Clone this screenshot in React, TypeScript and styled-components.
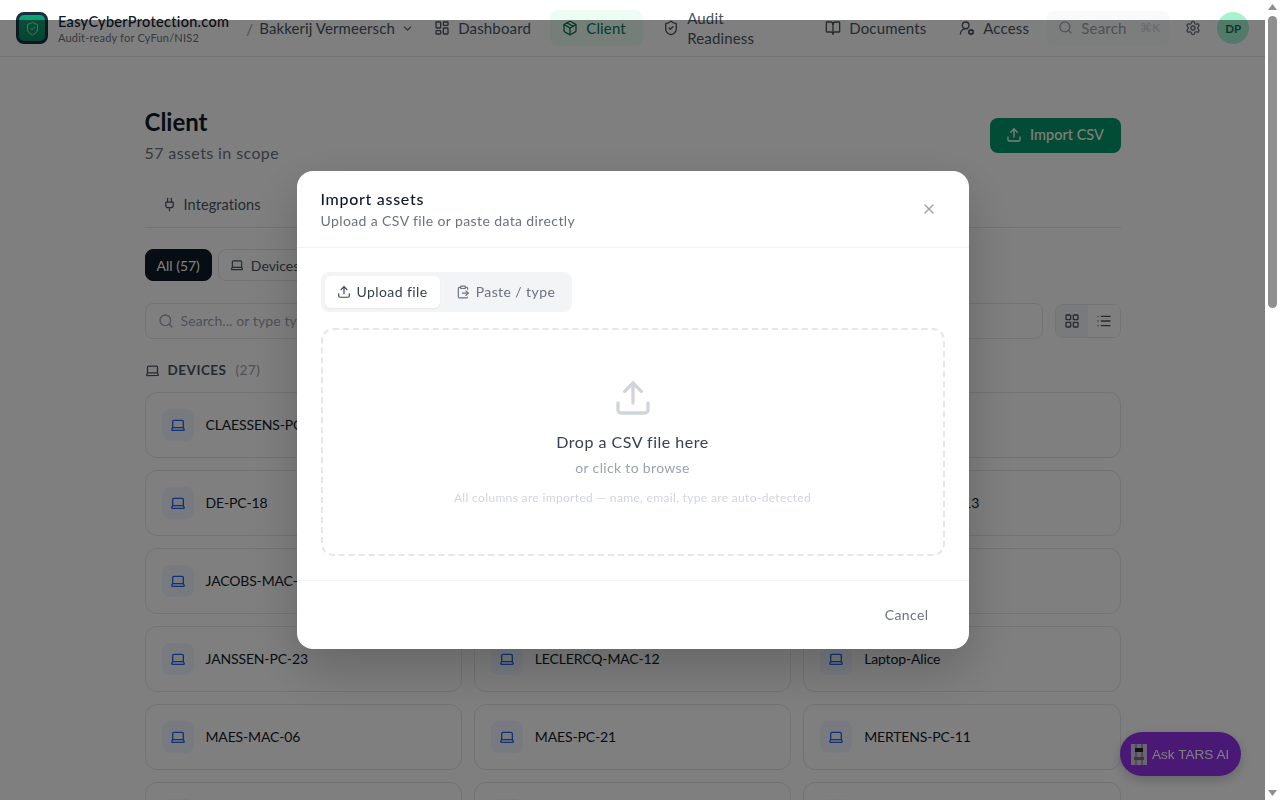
import React from "react";
import styled, { createGlobalStyle } from "styled-components";
import { Upload, ClipboardPaste, Plug, Laptop, Search, LayoutGrid, LayoutDashboard, List, X, ChevronDown, Package, ShieldCheck, BookOpen, UserRoundCog, Settings } from "lucide-react";

const Global = createGlobalStyle`
  html { overflow-x: hidden; }
  body { margin: 0; background: #fff; font-family: "Lato", "Noto Sans", sans-serif; color: #111827; }
  * { box-sizing: border-box; }
  svg { flex-shrink: 0; }
`;

const Page = styled.div`margin-right: 15px;`;
const Header = styled.header`
  height: 57px; display: flex; align-items: center; padding: 0 16px; border-bottom: 1px solid #e5e7eb; background: #fff;
`;
const Brand = styled.div`display: flex; align-items: center; gap: 10px; width: 226px; flex: none;`;
const Logo = styled.div`
  width: 32px; height: 32px; border-radius: 8px; flex: none; display: flex; align-items: center; justify-content: center;
  background: linear-gradient(180deg, #10a373, #0b8a60); border: 3px solid #173042; color: #a7e8cc;
`;
const BrandName = styled.div`font-size: 14.5px; font-weight: 500; line-height: 18px; letter-spacing: .3px; color: #111827; white-space: nowrap;`;
const BrandSub = styled.div`font-size: 11px; line-height: 13px; letter-spacing: .2px; color: #6b7280; white-space: nowrap;`;
const Slash = styled.span`color: #9ca3af; font-size: 16px; margin: 0 6px 0 4px;`;
const Org = styled.div`display: flex; align-items: center; gap: 6px; font-size: 15px; letter-spacing: .1px; color: #4b5563; width: 163px; flex: none; white-space: nowrap;`;
const Nav = styled.nav`display: flex; align-items: center; gap: 8px; flex: none;`;
const NavItem = styled.div<{ $w: number; $active?: boolean }>`
  width: ${(p) => p.$w}px; height: 36px; padding: 0 12px 1px; display: flex; align-items: center; gap: 8px; flex: none;
  font-size: 15px; letter-spacing: .15px; line-height: 20px; border-radius: 8px; color: ${(p) => (p.$active ? "#047857" : "#4b5563")};
  background: ${(p) => (p.$active ? "#ecfdf5" : "transparent")};
`;
const NavWrap = styled.span`width: 70px; flex: none;`;
const SearchPill = styled.div`
  width: 124px; height: 34px; padding: 0 10px 1px 12px; display: flex; align-items: center; gap: 8px; flex: none;
  border-radius: 8px; background: #f9fafb; color: #9ca3af; font-size: 15px; letter-spacing: .2px;
`;
const Kbd = styled.span`font-size: 12px; letter-spacing: 0; color: #d1d5db; margin-left: auto;`;
const IconSlot = styled.div`width: 32px; display: flex; justify-content: center; color: #6b7280; margin-left: 7px; flex: none;`;
const Avatar = styled.div`
  width: 32px; height: 32px; border-radius: 50%; flex: none; margin-left: 8px; background: #a7f3d0; color: #047857;
  display: flex; align-items: center; justify-content: center; font-size: 11.5px; font-weight: 700;
`;
const Main = styled.main`width: 976px; margin: 0 auto; padding-top: 47px; padding-bottom: 40px;`;
const TitleRow = styled.div`display: flex; justify-content: space-between; align-items: flex-start;`;
const H1 = styled.h1`margin: 0; font-size: 24px; line-height: 36px; font-weight: 700; color: #111827;`;
const Sub = styled.p`margin: 1px 0 0; font-size: 16px; letter-spacing: .4px; line-height: 24px; color: #6b7280;`;
const ImportBtn = styled.button`
  margin-top: 14px; width: 131px; height: 35px; padding: 0 0 2px; border: 0; border-radius: 8px; background: #059669; color: #fff;
  font: 500 14.5px "Lato", sans-serif; display: flex; align-items: center; justify-content: center; gap: 8px;
`;
const Tabs = styled.div`margin-top: 20px; height: 43px; border-bottom: 1px solid #e5e7eb; padding: 0 18px 3px 17px; display: flex; align-items: center; gap: 7px; font-size: 14.5px; letter-spacing: .1px; color: #4b5563;`;
const Pills = styled.div`margin-top: 21px; display: flex; gap: 6px;`;
const Pill = styled.div<{ $on?: boolean }>`
  height: 32px; padding: 0 11px; border-radius: 8px; display: flex; align-items: center; gap: 7px; font-size: 14px; white-space: nowrap;
  background: ${(p) => (p.$on ? "#111827" : "#fff")}; color: ${(p) => (p.$on ? "#fff" : "#4b5563")};
  border: 1px solid ${(p) => (p.$on ? "#111827" : "#e5e7eb")};
`;
const SearchRow = styled.div`margin-top: 22px; display: flex; align-items: center; gap: 12px;`;
const SearchBox = styled.div`
  flex: 1; height: 36px; border: 1px solid #e5e7eb; border-radius: 8px; padding: 0 12px 1px; display: flex; align-items: center; gap: 7px;
  color: #9ca3af; font-size: 14px; letter-spacing: .1px;
`;
const Toggle = styled.div`width: 66px; height: 34px; border: 1px solid #e5e7eb; border-radius: 8px; display: flex; overflow: hidden; flex: none;`;
const ToggleBtn = styled.div<{ $on?: boolean }>`
  flex: 1; display: flex; align-items: center; justify-content: center; color: #4b5563; background: ${(p) => (p.$on ? "#f3f4f6" : "#fff")};
`;
const Section = styled.div`margin-top: 21px; height: 20px; display: flex; align-items: center; gap: 8px; font-size: 13.5px; font-weight: 700; letter-spacing: .5px; color: #4b5563;`;
const Count = styled.span`font-weight: 400; color: #9ca3af; margin-left: 1px;`;
const Grid = styled.div`margin-top: 12px; display: grid; grid-template-columns: repeat(3, 1fr); gap: 12px;`;
const Card = styled.div`height: 66px; border: 1px solid #e5e7eb; border-radius: 12px; padding: 0 16px 1px; display: flex; align-items: center; gap: 12px; font-size: 14px; letter-spacing: -.15px; color: #111827; white-space: nowrap;`;
const CardIcon = styled.div`width: 32px; height: 32px; border-radius: 8px; background: #eff6ff; color: #2563eb; display: flex; align-items: center; justify-content: center; flex: none;`;
const Fab = styled.div`
  position: fixed; right: 39px; bottom: 24px; width: 121px; height: 44px; border-radius: 22px; background: #9333ea; color: #fff;
  display: flex; align-items: center; gap: 5px; padding-left: 11px; font: 13.6px "Liberation Sans", sans-serif; box-shadow: 0 4px 12px rgba(0,0,0,.2);
`;
const Overlay = styled.div`
  position: fixed; top: 20px; left: 0; right: 15px; bottom: 0; background: rgba(0,0,0,.5);
  display: flex; align-items: center; justify-content: center; z-index: 10;
`;
const Modal = styled.div`width: 672px; height: 478px; background: #fff; border-radius: 16px; display: flex; flex-direction: column; box-shadow: 0 20px 50px rgba(0,0,0,.2);`;
const ModalHead = styled.div`height: 77px; padding: 16px 24px 0; border-bottom: 1px solid #f3f4f6; display: flex; justify-content: space-between;`;
const ModalTitle = styled.div`font-size: 16px; font-weight: 500; letter-spacing: .7px; line-height: 24px; color: #111827;`;
const ModalSub = styled.div`font-size: 14px; letter-spacing: .39px; line-height: 20px; color: #6b7280;`;
const Close = styled.div`color: #9ca3af; margin: 14px 8px 0 0; width: 16px; height: 16px;`;
const ModalBody = styled.div`flex: 1; padding: 24px;`;
const Segment = styled.div`width: 251px; height: 40px; padding: 4px; background: #f3f4f6; border-radius: 8px; display: flex; gap: 4px;`;
const Seg = styled.div<{ $on?: boolean }>`
  height: 32px; padding: 0 12px 1px; display: flex; align-items: center; gap: 6px; font-size: 14px; letter-spacing: .42px; border-radius: 6px;
  background: ${(p) => (p.$on ? "#fff" : "transparent")}; color: ${(p) => (p.$on ? "#374151" : "#6b7280")};
  box-shadow: ${(p) => (p.$on ? "0 1px 2px rgba(0,0,0,.05)" : "none")};
`;
const Drop = styled.div`
  margin-top: 16px; height: 228px; border: 2px dashed #e5e7eb; border-radius: 12px; display: flex; flex-direction: column; align-items: center; padding-top: 48px;
`;
const DropIcon = styled.div`color: #d1d5db; height: 40px;`;
const DropTitle = styled.div`margin-top: 13px; font-size: 16px; letter-spacing: .5px; line-height: 22px; color: #374151;`;
const DropSub = styled.div`margin-top: 5px; font-size: 14px; letter-spacing: .33px; line-height: 20px; color: #9ca3af;`;
const DropHint = styled.div`margin-top: 11px; font-size: 12px; letter-spacing: .34px; line-height: 18px; color: #d1d5db;`;
const ModalFoot = styled.div`height: 69px; border-top: 1px solid #f3f4f6; padding: 0 40px 2px; display: flex; align-items: center; justify-content: flex-end; font-size: 14px; letter-spacing: .4px; color: #6b7280;`;
const Scrollbar = styled.div`
  position: fixed; top: 0; right: 0; bottom: 0; width: 15px; background: #fff; z-index: 20;
  display: flex; flex-direction: column; align-items: center; justify-content: space-between; padding: 4px 0;
`;
const Thumb = styled.div`position: absolute; top: 16px; left: 3px; width: 9px; height: 292px; border-radius: 5px; background: #8f8f8f;`;

const rows = [
  ["CLAESSENS-PC-01", "", ""],
  ["DE-PC-18", "", "VERHAEGE-PC-13"],
  ["JACOBS-MAC-04", "", ""],
  ["JANSSEN-PC-23", "LECLERCQ-MAC-12", "Laptop-Alice"],
  ["MAES-MAC-06", "MAES-PC-21", "MERTENS-PC-11"],
  ["", "", ""],
  ["", "", ""],
  ["", "", ""],
].flat();

export default function App() {
  return (
    <>
      <Global />
      <Page>
        <Header>
          <Brand>
            <Logo><ShieldCheck size={15} strokeWidth={1.6} /></Logo>
            <div>
              <BrandName>EasyCyberProtection.com</BrandName>
              <BrandSub>Audit-ready for CyFun/NIS2</BrandSub>
            </div>
          </Brand>
          <Slash>/</Slash>
          <Org>Bakkerij Vermeersch <ChevronDown size={13} /></Org>
          <Nav>
            <NavItem $w={120}><LayoutDashboard size={16} />Dashboard</NavItem>
            <NavItem $w={93} $active><Package size={16} />Client</NavItem>
            <NavItem $w={154}><ShieldCheck size={16} /><NavWrap>Audit Readiness</NavWrap></NavItem>
            <NavItem $w={126}><BookOpen size={16} />Documents</NavItem>
            <NavItem $w={91}><UserRoundCog size={16} />Access</NavItem>
            <SearchPill><Search size={15} />Search<Kbd>⌘K</Kbd></SearchPill>
          </Nav>
          <IconSlot><Settings size={16} /></IconSlot>
          <Avatar>DP</Avatar>
        </Header>
        <Main>
          <TitleRow>
            <div>
              <H1>Client</H1>
              <Sub>57 assets in scope</Sub>
            </div>
            <ImportBtn><Upload size={16} />Import CSV</ImportBtn>
          </TitleRow>
          <Tabs><Plug size={15} />Integrations</Tabs>
          <Pills>
            <Pill $on>All (57)</Pill>
            <Pill><Laptop size={14} />Devices (27)</Pill>
          </Pills>
          <SearchRow>
            <SearchBox><Search size={16} />Search... or type type:device</SearchBox>
            <Toggle>
              <ToggleBtn $on><LayoutGrid size={16} /></ToggleBtn>
              <ToggleBtn><List size={16} /></ToggleBtn>
            </Toggle>
          </SearchRow>
          <Section><Laptop size={15} />DEVICES <Count>(27)</Count></Section>
          <Grid>
            {rows.map((name, i) => (
              <Card key={i}><CardIcon><Laptop size={16} /></CardIcon>{name}</Card>
            ))}
          </Grid>
        </Main>
      </Page>
      <Fab>
        <svg width="16" height="21" viewBox="0 0 16 21">
          <rect width="16" height="21" fill="#d8c8e8" />
          <path d="M5 0v21M11 0v21" stroke="#6b6b70" strokeWidth="1" />
          <rect x="4" y="4" width="8" height="4" fill="#222" />
          <rect x="3" y="13" width="10" height="3" fill="#777" />
        </svg>
        Ask TARS AI
      </Fab>
      <Overlay>
        <Modal>
          <ModalHead>
            <div>
              <ModalTitle>Import assets</ModalTitle>
              <ModalSub>Upload a CSV file or paste data directly</ModalSub>
            </div>
            <Close><X size={16} /></Close>
          </ModalHead>
          <ModalBody>
            <Segment>
              <Seg $on><Upload size={14} />Upload file</Seg>
              <Seg><ClipboardPaste size={14} />Paste / type</Seg>
            </Segment>
            <Drop>
              <DropIcon><Upload size={40} strokeWidth={2} /></DropIcon>
              <DropTitle>Drop a CSV file here</DropTitle>
              <DropSub>or click to browse</DropSub>
              <DropHint>All columns are imported — name, email, type are auto-detected</DropHint>
            </Drop>
          </ModalBody>
          <ModalFoot>Cancel</ModalFoot>
        </Modal>
      </Overlay>
      <Scrollbar>
        <svg width="9" height="6" viewBox="0 0 9 6"><path d="M4.5 0L9 6H0z" fill="#8f8f8f" /></svg>
        <Thumb />
        <svg width="9" height="6" viewBox="0 0 9 6"><path d="M0 0h9L4.5 6z" fill="#8f8f8f" /></svg>
      </Scrollbar>
    </>
  );
}
